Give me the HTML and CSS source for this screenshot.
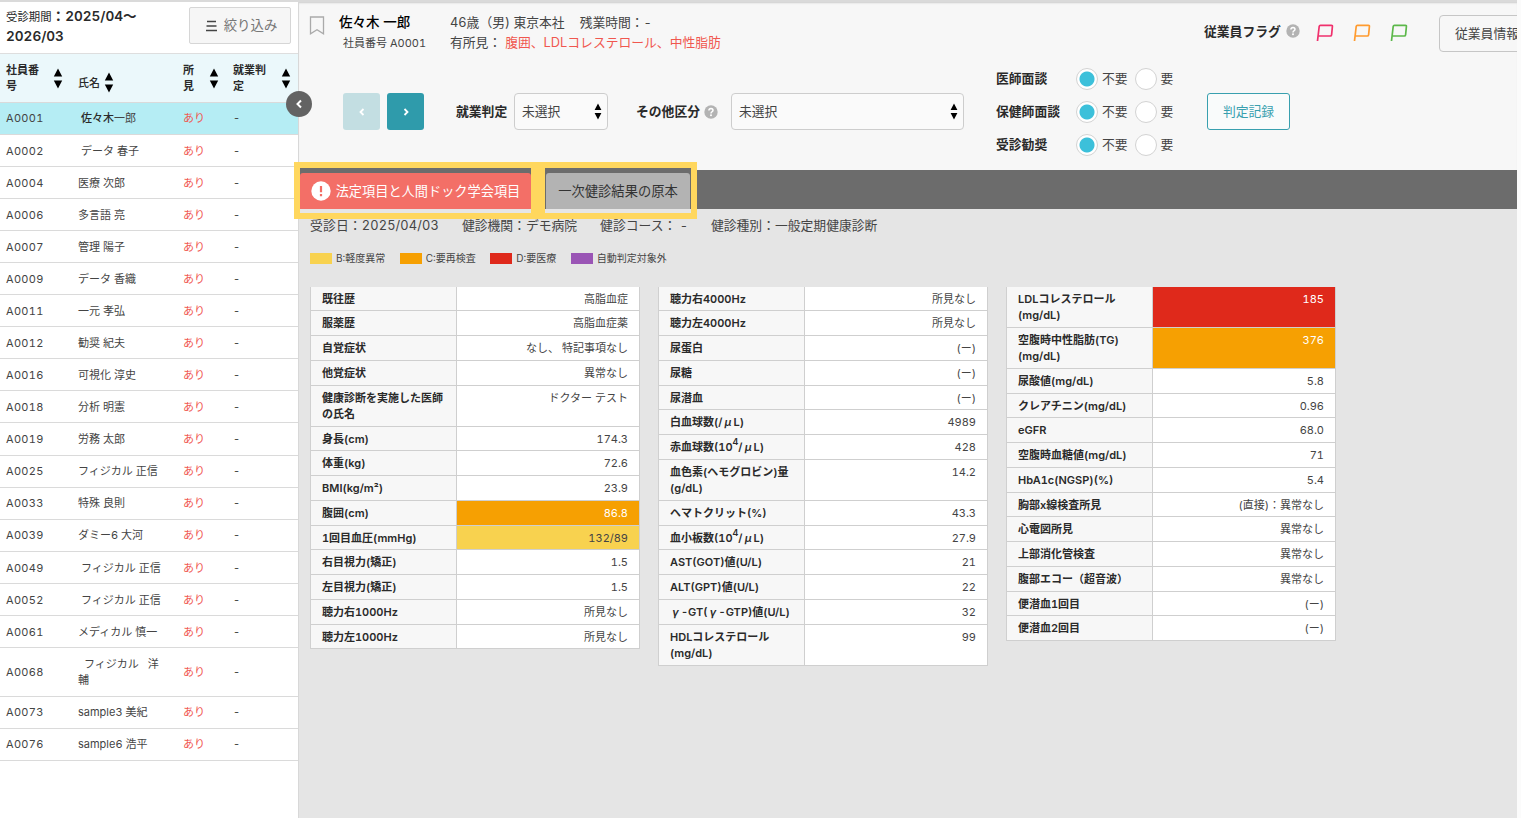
FILE: index.html
```html
<!DOCTYPE html>
<html lang="ja">
<head>
<meta charset="utf-8">
<title>健診結果</title>
<link rel="stylesheet" href="styles.css">
</head>
<body>
<svg class="defs" width="0" height="0">
  <symbol id="sort" viewBox="0 0 10 22"><path d="M5 0.5 9.4 9H.6zM5 21.500 9.400 13H.6z"/></symbol>
  <symbol id="flag" viewBox="0 0 18 18"><path d="M1.500 17 3.200 2.300Q3.400 1.300 4.400 1.300H15.400Q16.600 1.300 16.400 2.500L15.600 10.800Q15.400 12 14.300 12H2.300" fill="none" stroke="currentColor" stroke-width="1.700"/></symbol>
  <symbol id="help" viewBox="0 0 14 14"><circle cx="7" cy="7" r="6.700" fill="#b3b3b3"/><path d="M4.900 5.500Q5 3.600 7 3.600 9 3.700 9 5.300 9 6.300 7.900 6.900 7 7.400 7 8.400" fill="none" stroke="#fff" stroke-width="1.500"/><circle cx="7" cy="10.300" r="1" fill="#fff"/></symbol>
</svg>
<div class="app">
  <aside class="side">
    <div class="period">
      <p class="range"><span class="cap">受診期間</span>：2025/04〜<br>2026/03</p>
      <button class="filter"><svg width="11" height="12" viewBox="0 0 11 12"><path d="M1 1.500H10M0.500 6H10.500M0 10.500H11" stroke="#444" stroke-width="1.300"/></svg>絞り込み</button>
    </div>
    <div class="row head">
      <div class="hc"><span class="t">社員番号</span><svg class="s s1"><use href="#sort"/></svg></div>
      <div class="hc name"><span>氏名</span><svg class="s s2"><use href="#sort"/></svg></div>
      <div class="hc"><span class="t2">所見</span><svg class="s s3"><use href="#sort"/></svg></div>
      <div class="hc"><span class="t">就業判定</span><svg class="s s4"><use href="#sort"/></svg></div>
    </div>
    <div class="row sel"><span>A0001</span><span class="in"><b>佐々木</b>一郎</span><em>あり</em><span>-</span></div>
    <div class="row"><span>A0002</span><span class="in">データ 春子</span><em>あり</em><span>-</span></div>
    <div class="row"><span>A0004</span><span>医療 次郎</span><em>あり</em><span>-</span></div>
    <div class="row"><span>A0006</span><span>多言語 亮</span><em>あり</em><span>-</span></div>
    <div class="row"><span>A0007</span><span>管理 陽子</span><em>あり</em><span>-</span></div>
    <div class="row"><span>A0009</span><span>データ 香織</span><em>あり</em><span>-</span></div>
    <div class="row"><span>A0011</span><span>一元 孝弘</span><em>あり</em><span>-</span></div>
    <div class="row"><span>A0012</span><span>勧奨 紀夫</span><em>あり</em><span>-</span></div>
    <div class="row"><span>A0016</span><span>可視化 淳史</span><em>あり</em><span>-</span></div>
    <div class="row"><span>A0018</span><span>分析 明憲</span><em>あり</em><span>-</span></div>
    <div class="row"><span>A0019</span><span>労務 太郎</span><em>あり</em><span>-</span></div>
    <div class="row"><span>A0025</span><span>フィジカル 正信</span><em>あり</em><span>-</span></div>
    <div class="row"><span>A0033</span><span>特殊 良則</span><em>あり</em><span>-</span></div>
    <div class="row"><span>A0039</span><span>ダミー6 大河</span><em>あり</em><span>-</span></div>
    <div class="row"><span>A0049</span><span class="in">フィジカル 正信</span><em>あり</em><span>-</span></div>
    <div class="row"><span>A0052</span><span class="in">フィジカル 正信</span><em>あり</em><span>-</span></div>
    <div class="row"><span>A0061</span><span>メディカル 慎一</span><em>あり</em><span>-</span></div>
    <div class="row two"><span>A0068</span><span><i class="lead">フィジカル</i>洋<br>輔</span><em>あり</em><span>-</span></div>
    <div class="row"><span>A0073</span><span>sample3 美紀</span><em>あり</em><span>-</span></div>
    <div class="row"><span>A0076</span><span>sample6 浩平</span><em>あり</em><span>-</span></div>
    <button class="collapse" aria-label="閉じる"><svg width="8" height="10" viewBox="0 0 8 10"><path d="M6 1.500 2.500 5 6 8.500" fill="none" stroke="#fff" stroke-width="2"/></svg></button>
  </aside>

  <main class="main">
    <header class="top">
      <div class="who">
        <svg class="mark" width="16" height="19" viewBox="0 0 16 19"><path d="M1.500 1H14.500V17.800L8 13.700 1.500 17.800Z" fill="none" stroke="#aaa" stroke-width="1.300"/></svg>
        <div class="id"><strong>佐々木 一郎</strong><span>社員番号 A0001</span></div>
        <div class="info">
          <div><span>46歳（男) 東京本社</span><span class="ot">残業時間：-</span></div>
          <div><span>有所見：</span><span class="red">腹囲、LDLコレステロール、中性脂肪</span></div>
        </div>
        <div class="flags">
          <b>従業員フラグ</b><svg class="help"><use href="#help"/></svg>
          <svg class="flag f1"><use href="#flag"/></svg><svg class="flag f2"><use href="#flag"/></svg><svg class="flag f3"><use href="#flag"/></svg>
        </div>
        <button class="detail">従業員情報</button>
      </div>
      <div class="ctrl">
        <button class="nav off"><svg width="8" height="10" viewBox="0 0 8 10"><path d="M5.500 2 2.500 5 5.500 8" fill="none" stroke="#fff" stroke-width="1.800"/></svg></button>
        <button class="nav"><svg width="8" height="10" viewBox="0 0 8 10"><path d="M2.500 2 5.500 5 2.500 8" fill="none" stroke="#fff" stroke-width="1.800"/></svg></button>
        <b class="l1">就業判定</b>
        <div class="select a">未選択<svg><use href="#sort"/></svg></div>
        <b class="l2">その他区分</b><svg class="help"><use href="#help"/></svg>
        <div class="select b">未選択<svg><use href="#sort"/></svg></div>
        <div class="radios">
          <div><b>医師面談</b><i class="r on"></i>不要<i class="r off"></i>要</div>
          <div><b>保健師面談</b><i class="r on"></i>不要<i class="r off"></i>要</div>
          <div><b>受診勧奨</b><i class="r on"></i>不要<i class="r off"></i>要</div>
        </div>
        <button class="log">判定記録</button>
      </div>
    </header>

    <nav class="tabs">
      <div class="mk m1"><div class="tab act"><svg width="20" height="20" viewBox="0 0 20 20"><circle cx="10" cy="10" r="9.700" fill="#fff"/><path d="M10 5V11.200M10 13.100V15.300" stroke="#f26c64" stroke-width="2.200"/></svg>法定項目と人間ドック学会項目</div></div>
      <div class="mk m2"><div class="tab">一次健診結果の原本</div></div>
    </nav>

    <section class="body">
      <div class="meta"><span>受診日：2025/04/03</span><span>健診機関：デモ病院</span><span>健診コース： -</span><span>健診種別：一般定期健康診断</span></div>
      <div class="legend">
        <span><i class="sw y"></i>B:軽度異常</span><span><i class="sw o"></i>C:要再検査</span><span><i class="sw d"></i>D:要医療</span><span><i class="sw p"></i>自動判定対象外</span>
      </div>
      <div class="tables">
        <dl>
          <dt>既往歴</dt><dd>高脂血症</dd>
          <dt>服薬歴</dt><dd>高脂血症薬</dd>
          <dt>自覚症状</dt><dd>なし、 特記事項なし</dd>
          <dt>他覚症状</dt><dd>異常なし</dd>
          <dt>健康診断を実施した医師<br>の氏名</dt><dd>ドクター テスト</dd>
          <dt>身長(cm)</dt><dd>174.3</dd>
          <dt>体重(kg)</dt><dd>72.6</dd>
          <dt>BMI(kg/m²)</dt><dd>23.9</dd>
          <dt>腹囲(cm)</dt><dd class="o">86.8</dd>
          <dt>1回目血圧(mmHg)</dt><dd class="y">132/89</dd>
          <dt>右目視力(矯正)</dt><dd>1.5</dd>
          <dt>左目視力(矯正)</dt><dd>1.5</dd>
          <dt>聴力右1000Hz</dt><dd>所見なし</dd>
          <dt>聴力左1000Hz</dt><dd>所見なし</dd>
        </dl>
        <dl>
          <dt>聴力右4000Hz</dt><dd>所見なし</dd>
          <dt>聴力左4000Hz</dt><dd>所見なし</dd>
          <dt>尿蛋白</dt><dd>(ー)</dd>
          <dt>尿糖</dt><dd>(ー)</dd>
          <dt>尿潜血</dt><dd>(ー)</dd>
          <dt>白血球数(/<i class="gr">μ</i>L)</dt><dd>4989</dd>
          <dt>赤血球数(10<sup>4</sup>/<i class="gr">μ</i>L)</dt><dd>428</dd>
          <dt>血色素(ヘモグロビン)量<br>(g/dL)</dt><dd>14.2</dd>
          <dt>ヘマトクリット(%)</dt><dd>43.3</dd>
          <dt>血小板数(10<sup>4</sup>/<i class="gr">μ</i>L)</dt><dd>27.9</dd>
          <dt>AST(GOT)値(U/L)</dt><dd>21</dd>
          <dt>ALT(GPT)値(U/L)</dt><dd>22</dd>
          <dt><i class="gr">γ</i>-GT(<i class="gr">γ</i>-GTP)値(U/L)</dt><dd>32</dd>
          <dt>HDLコレステロール<br>(mg/dL)</dt><dd>99</dd>
        </dl>
        <dl>
          <dt>LDLコレステロール<br>(mg/dL)</dt><dd class="d">185</dd>
          <dt>空腹時中性脂肪(TG)<br>(mg/dL)</dt><dd class="o">376</dd>
          <dt>尿酸値(mg/dL)</dt><dd>5.8</dd>
          <dt>クレアチニン(mg/dL)</dt><dd>0.96</dd>
          <dt>eGFR</dt><dd>68.0</dd>
          <dt>空腹時血糖値(mg/dL)</dt><dd>71</dd>
          <dt>HbA1c(NGSP)(%)</dt><dd>5.4</dd>
          <dt>胸部x線検査所見</dt><dd>(直接)：異常なし</dd>
          <dt>心電図所見</dt><dd>異常なし</dd>
          <dt>上部消化管検査</dt><dd>異常なし</dd>
          <dt>腹部エコー（超音波）</dt><dd>異常なし</dd>
          <dt>便潜血1回目</dt><dd>(ー)</dd>
          <dt>便潜血2回目</dt><dd>(ー)</dd>
        </dl>
      </div>
    </section>
  </main>
</div>
</body>
</html>
```
FILE: styles.css
```css
* { box-sizing: border-box; }
body { margin: 0; background: #fbfbfb; color: #444; font: 12.8px/19px Inter, "Noto Sans CJK JP", sans-serif; font-variant-numeric: tabular-nums; overflow: hidden; }
button { font: inherit; color: inherit; padding: 0; display: flex; align-items: center; justify-content: center; }
p, dl, dd { margin: 0; }
i, em { font-style: normal; }
b, strong { font-weight: 600; color: #2a2a2a; }
.defs { position: absolute; }
.app { display: flex; width: 1517px; height: 818px; border-top: 2px solid #dadada; overflow: hidden; }

/* employee list */
.side { position: relative; flex: none; width: 299px; background: #fff; border-right: 1px solid #d8d8d8; font-size: 11px; line-height: 16.500px; }
.period { display: flex; justify-content: space-between; height: 51px; padding: 5px 7px 0 6px; }
.range { font-size: 13.600px; line-height: 19px; font-weight: 600; color: #2a2a2a; white-space: nowrap; }
.cap { font-size: 11.400px; font-weight: 400; }
.filter { width: 102px; height: 37px; gap: 7px; padding-left: 3px; border: 1px solid #d6d6d6; border-radius: 2px; background: #f6f6f6; font-size: 13.400px; color: #777; }
.row { display: grid; grid-template-columns: 72px 105px 50px 1fr; align-items: center; height: 32.080px; padding: 1px 0 0 6px; border-bottom: 1px solid #dadada; }
.row > span:first-child { letter-spacing: .3px; }
.row.two { height: 48.500px; }
.row em { color: #f0574f; }
.row.sel { background: #b5edf4; }
.row b { font-weight: 500; }
.row .in { padding-left: 3px; }
.lead { padding: 0 9px 0 6px; }
.row.head { height: 49.700px; background: #ebf8fb; border-top: 1px solid #dedede; font-weight: 600; color: #2a2a2a; }
.hc { display: flex; align-items: center; }
.hc.name { padding-top: 9px; font-weight: 500; }
.t { width: 34px; }
.t2 { width: 12px; }
.s { width: 10px; height: 21px; flex: none; }
.s1 { margin-left: 13px; }
.s2 { margin-left: 4px; }
.s3 { margin-left: 14px; }
.s4 { margin-left: 14px; }
.collapse { position: absolute; left: 286px; top: 89px; z-index: 3; width: 26px; height: 26px; border: 0; border-radius: 50%; background: #636363; }

/* employee header */
.main { flex: 1; min-width: 0; display: flex; flex-direction: column; }
.top { height: 168px; background: #f7f7f7; overflow: hidden; box-shadow: inset 0 2px 2px -1px #ccc; }
.who { display: flex; height: 60px; white-space: nowrap; }
.mark { margin: 14px 0 0 10px; flex: none; }
.id { flex: none; width: 111px; margin: 11px 0 0 14px; }
.id strong, .id span { display: block; height: 19.500px; }
.id strong { font-size: 13.500px; font-weight: 500; color: #000; }
.id span { font-size: 11px; padding: 1px 0 0 4px; }
.info { flex: none; width: 754px; margin-top: 11px; }
.info > div { display: flex; height: 19.500px; }
.info .ot { margin-left: 15px; }
.info .red { margin-left: 4px; color: #f0574f; }
.flags { display: flex; align-items: center; width: 235px; height: 24px; margin-top: 17px; flex: none; }
.help { width: 14px; height: 14px; flex: none; margin-left: 5px; }
.flag { width: 18px; height: 18px; margin-top: 4px; flex: none; }
.f1 { color: #f0316d; margin-left: 16px; }
.f2 { color: #ff9b2f; margin-left: 19px; }
.f3 { color: #5cb84a; margin-left: 19px; }
.detail { flex: none; justify-content: flex-start; width: 110px; height: 37px; margin-top: 13px; padding-left: 15px; border: 1px solid #c6c6c6; border-radius: 4px; background: #f7f7f7; }
.ctrl { display: flex; align-items: center; height: 99px; padding-left: 44px; white-space: nowrap; }
.nav { width: 37px; height: 37px; margin-right: 7px; border: 0; border-radius: 3px; background: #2f9bab; }
.nav.off { background: #c3dee2; }
.l1 { width: 51px; margin: 0 7px 0 25px; }
.l2 { margin-left: 28px; }
.select { display: flex; align-items: center; justify-content: space-between; height: 37px; padding: 0 5px 0 7px; border: 1px solid #cdcdcd; border-radius: 4px; background: #fafafa; }
.select svg { width: 8px; height: 17px; }
.select.a { width: 94px; }
.select.b { width: 233px; margin-left: 13px; }
.ctrl .help { margin-left: 4px; }
.radios { margin-left: 32px; width: 211px; }
.radios > div { display: flex; align-items: center; height: 33px; }
.radios b { width: 80px; }
.r { width: 22px; height: 22px; margin-right: 4px; border: 1px solid #d3d3d3; border-radius: 50%; background: #fff; }
.r.off { margin-left: 7px; }
.r.on { background: radial-gradient(circle, #3cc0da 7px, #fff 8px); }
.log { width: 83px; height: 37px; border: 1px solid #38a0af; border-radius: 3px; background: #f9fbfb; color: #38a0af; }

/* tabs with highlight frames */
.tabs { position: relative; flex: none; height: 39px; background: #6c6c6c; }
.mk { position: absolute; z-index: 2; top: -8px; height: 57px; border: 6px solid #ffd75e; background: #e6e6e6; box-shadow: inset 0 8px #6c6c6c; padding-top: 5px; }
.m1 { left: -5px; width: 243px; }
.m2 { left: 237px; width: 161px; border-left-width: 9px; }
.tab { display: flex; align-items: center; justify-content: center; height: 36px; border-radius: 3px 3px 0 0; background: #b3b3b3; color: #333; font-size: 13.300px; white-space: nowrap; }
.m2 .tab { margin: 0 1px; box-shadow: -1px 3px #6c6c6c, 1px 3px #6c6c6c; height: 36px; }
.m2 .tab { box-shadow: -1px 0 #6c6c6c, 1px 0 #6c6c6c; }
.tab.act { gap: 5px; background: #f36f67; color: #fff; font-size: 13.200px; }

/* results */
.body { flex: 1; background: #e5e5e5; padding: 7px 0 0 11px; }
.meta { display: flex; gap: 23px; white-space: nowrap; }
.meta span:first-child { letter-spacing: .15px; }
.legend { display: flex; gap: 14.500px; margin-top: 16px; height: 14px; align-items: center; font-size: 10px; }
.legend span { display: flex; align-items: center; }
.sw { width: 22px; height: 11px; margin-right: 4px; }
.y { background: #f8d24f; }
.o { background: #f6a002; }
.d { background: #df291b; }
.p { background: #9a55b5; }
.tables { display: flex; align-items: flex-start; gap: 19px; margin-top: 21.500px; font-size: 11px; line-height: 16.500px; }
dl { display: grid; grid-template-columns: 146px 183px; width: 329px; border: solid #d0d0d0; border-width: 0 0 0 1px; }
dt, dd { min-height: 24.750px; padding: 4px 11px 3.200px; border: solid #cfcfcf; border-width: 0 1px 1px 0; white-space: nowrap; }
dt { background: #f7f7f7; color: #2a2a2a; font-weight: 600; }
dd { background-color: #fff; text-align: right; }
dd.y { background: #f8d24f; }
dd.o, dd.d { color: #fff; }
dd.o { background: #f6a002; }
dd.d { background: #df291b; }
sup { font-size: 9px; line-height: 0; vertical-align: 6px; }
.gr { display: inline-block; width: 11px; text-align: center; font-style: italic; }
```
